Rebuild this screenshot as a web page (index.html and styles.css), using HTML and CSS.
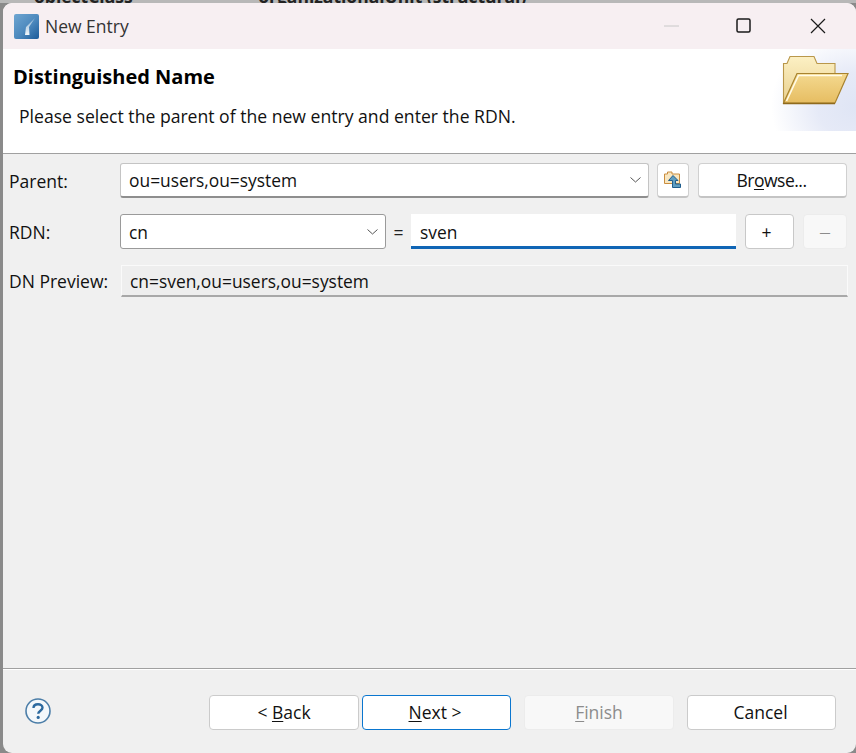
FILE: index.html
```html
<!DOCTYPE html>
<html lang="en">
<head>
  <meta charset="UTF-8">
  <title>New Entry</title>
  <link rel="stylesheet" href="styles.css">
</head>
<body>
  <div class="behind">
    <span class="behind-a">objectClass</span>
    <span class="behind-b">organizationalUnit (structural)</span>
  </div>
  <div class="window">
    <div class="titlebar">
      <svg class="app-icon" width="25" height="25" viewBox="0 0 25 25">
        <defs>
          <linearGradient id="appBg" x1="0" y1="0" x2="1" y2="1">
            <stop offset="0" stop-color="#6fa6d2"/>
            <stop offset="0.55" stop-color="#4c88bd"/>
            <stop offset="1" stop-color="#1b5a99"/>
          </linearGradient>
          <linearGradient id="appRay" x1="0" y1="0" x2="0" y2="1">
            <stop offset="0" stop-color="#cfe0ee" stop-opacity="0.5"/>
            <stop offset="1" stop-color="#ffffff" stop-opacity="0.95"/>
          </linearGradient>
        </defs>
        <rect width="25" height="25" rx="2" fill="url(#appBg)"/>
        <path d="M21 4 L15 13 L15.5 21 L11 21 L12 13 Z" fill="url(#appRay)"/>
      </svg>
      <span class="title">New Entry</span>
      <div class="controls">
        <svg class="ctl ctl-min" width="16" height="16" viewBox="0 0 16 16"><path d="M0 8H15" stroke="#c8c8c8" stroke-width="1"/></svg>
        <svg class="ctl ctl-max" width="16" height="16" viewBox="0 0 16 16"><rect x="1" y="1" width="13" height="13" rx="1.5" fill="none" stroke="#1a1a1a" stroke-width="1.5"/></svg>
        <svg class="ctl ctl-close" width="16" height="16" viewBox="0 0 16 16"><path d="M1 1L15 15M15 1L1 15" stroke="#1a1a1a" stroke-width="1.2"/></svg>
      </div>
    </div>

    <div class="banner">
      <div class="banner-text">
        <h1>Distinguished Name</h1>
        <p>Please select the parent of the new entry and enter the RDN.</p>
      </div>
      <div class="banner-art">
        <svg width="72" height="52" viewBox="0 0 72 52">
          <defs>
            <linearGradient id="folderBack" x1="0" y1="0" x2="0" y2="1">
              <stop offset="0" stop-color="#fcf0c4"/>
              <stop offset="1" stop-color="#e9d08e"/>
            </linearGradient>
            <linearGradient id="folderFront" x1="0" y1="0" x2="0" y2="1">
              <stop offset="0" stop-color="#f4d98f"/>
              <stop offset="1" stop-color="#e6bd62"/>
            </linearGradient>
          </defs>
          <path d="M3.5 48V8.5H7L10 1.5H34L37 8.5H55V19H18L6 48Z" fill="url(#folderBack)" stroke="#b9974a" stroke-width="1.1"/>
          <path d="M3.5 48L17 18.5H68L55 48Z" fill="url(#folderFront)" stroke="#a8832f" stroke-width="1.2"/>
          <path d="M6.5 46L18.5 20.5H62" fill="none" stroke="#fffbe8" stroke-width="1.6"/>
          <path d="M3 48.5H55" stroke="#8f6a1c" stroke-width="1.6"/>
        </svg>
      </div>
    </div>

    <div class="content">
      <div class="row row-parent">
        <label class="field-label">Parent:</label>
        <div class="combo combo-parent">
          <span class="value">ou=users,ou=system</span>
          <svg class="chevron" width="11" height="6" viewBox="0 0 11 6"><path d="M0.5 0.5L5.5 5L10.5 0.5" fill="none" stroke="#555" stroke-width="1"/></svg>
        </div>
        <button class="btn btn-icon">
          <svg width="20" height="20" viewBox="0 0 20 20">
            <path d="M1.5 4H4.5V2H9V4H16.5V13.5H1.5Z" fill="#f8e6c0" stroke="#c98d3e" stroke-width="1"/>
            <path d="M10 5.5L15 10.5H12.5V14H17.5V17.5H9.5V10.5H5.5Z" fill="#5f9dbf" stroke="#1d5c8c" stroke-width="1"/>
          </svg>
        </button>
        <button class="btn btn-browse"><span>Br<u>o</u>wse...</span></button>
      </div>

      <div class="row row-rdn">
        <label class="field-label">RDN:</label>
        <div class="combo combo-rdn">
          <span class="value">cn</span>
          <svg class="chevron" width="11" height="6" viewBox="0 0 11 6"><path d="M0.5 0.5L5.5 5L10.5 0.5" fill="none" stroke="#555" stroke-width="1"/></svg>
        </div>
        <span class="equals">=</span>
        <div class="text-input"><span class="value">sven</span></div>
        <button class="btn btn-small btn-plus">+</button>
        <button class="btn btn-small btn-off">&#8212;</button>
      </div>

      <div class="row row-preview">
        <label class="field-label">DN Preview:</label>
        <div class="readonly"><span class="value">cn=sven,ou=users,ou=system</span></div>
      </div>
    </div>

    <div class="footer">
      <svg class="help" width="28" height="28" viewBox="0 0 28 28">
        <circle cx="14" cy="14" r="12" fill="#f4f8fb" stroke="#4c7ea8" stroke-width="1.6"/>
        <path d="M9.5 11C9.5 8.5 11.5 7.2 14 7.2C16.5 7.2 18.5 8.6 18.5 10.8C18.5 13.6 14.2 13.8 14.2 16.8" fill="none" stroke="#2d6a9f" stroke-width="2.4"/>
        <circle cx="14.2" cy="20.4" r="1.6" fill="#2d6a9f"/>
      </svg>
      <div class="footer-buttons">
        <button class="btn btn-nav btn-back"><span>&lt; <u>B</u>ack</span></button>
        <button class="btn btn-nav btn-next"><span><u>N</u>ext &gt;</span></button>
        <button class="btn btn-nav btn-finish btn-off"><span><u>F</u>inish</span></button>
        <button class="btn btn-nav btn-cancel">Cancel</button>
      </div>
    </div>
  </div>
</body>
</html>
```

FILE: styles.css
```css
* { box-sizing: border-box; }
html, body { margin: 0; height: 100%; }
body { width: 856px; height: 753px; overflow: hidden; background: #8a8a8a; font-family: "Open Sans", "Noto Sans", sans-serif; font-size: 17.5px; color: #111; }

.behind { height: 3px; overflow: hidden; background: #b8b8b8; white-space: nowrap; line-height: 10px; font-weight: bold; font-size: 17.5px; color: #222; }
.behind-a { display: inline-block; margin: -9px 0 0 34px; vertical-align: top; }
.behind-b { display: inline-block; margin: -9px 0 0 121px; vertical-align: top; }

.window { margin-left: 3px; height: 750px; background: #f0f0f0; border-radius: 9px; overflow: hidden; display: flex; flex-direction: column; }

.titlebar { height: 46px; background: #f7eff2; display: flex; align-items: center; padding-left: 11px; flex: none; }
.app-icon { flex: none; }
.title { margin-left: 6px; font-size: 17.5px; color: #333; }
.controls { margin-left: auto; display: flex; align-items: center; }
.ctl { flex: none; }
.ctl-min { margin-right: 56px; }
.ctl-max { margin-right: 58px; }
.ctl-close { margin-right: 30px; }

.banner { height: 105px; flex: none; background: #fff; border-bottom: 1px solid #a0a0a0; display: flex; justify-content: space-between; }
.banner-text h1 { margin: 15px 0 0 10px; font-size: 20px; line-height: 26px; font-weight: bold; color: #000; }
.banner-text p { margin: 14px 0 0 16px; font-size: 17.6px; line-height: 24px; color: #111; }
.banner-art { width: 90px; height: 82px; padding: 6px 0 0 14px; background: radial-gradient(ellipse 85px 75px at 100% 70%, #dfe5f5 0%, #e6eaf7 45%, #ffffff 100%); }

.content { flex: 1; border-bottom: 1px solid #a0a0a0; padding: 9px 8px 0 6px; display: flex; flex-direction: column; }
.row { display: flex; align-items: center; }
.row-parent { height: 35px; }
.row-rdn { height: 35px; margin-top: 16px; }
.row-preview { height: 32px; margin-top: 16px; }
.field-label { width: 111px; flex: none; font-size: 17.5px; color: #111; }
.value { font-size: 17.4px; color: #111; }

.combo { height: 100%; flex: none; background: #fff; border: 1px solid #c4c4c4; border-bottom: 2px solid #8e8e8e; border-radius: 3px; padding: 0 8px; display: flex; align-items: center; justify-content: space-between; }
.combo-parent { width: 529px; }
.combo-rdn { width: 266px; border-bottom-width: 1px; border-color: #9a9a9a; }
.chevron { flex: none; margin-right: -1px; }
.equals { width: 25px; flex: none; text-align: center; font-size: 17.5px; color: #222; }
.text-input { width: 325px; height: 100%; flex: none; background: #fff; border-bottom: 3px solid #0f65b5; padding: 3px 9px 0; display: flex; align-items: center; }
.readonly { width: 727px; margin-left: 1px; height: 100%; background: #eeeeee; border: 1px solid #fafafa; border-bottom: 2px solid #a8a8a8; padding: 0 8px; display: flex; align-items: center; }

.btn { height: 100%; flex: none; padding: 0; background: #fff; border: 1px solid #d0d0d0; border-bottom: 2px solid #c4c4c4; border-radius: 4px; font-family: inherit; font-size: 17.5px; color: #111; display: flex; align-items: center; justify-content: center; }
.btn u { text-underline-offset: 2px; }
.btn-icon { width: 32px; margin-left: 8px; }
.btn-browse { width: 149px; margin-left: 9px; padding: 0 2px 0 0; letter-spacing: -0.5px; }
.btn-small { width: 49px; border: 1px solid #c8c8c8; }
.btn-plus { padding-right: 6px; }
.row-rdn .btn-small { margin-left: 9px; }
.row-rdn .btn-off { width: 44px; font-size: 11px; }
.btn-off { background: #f8f8f8; border: 1px solid #ececec; color: #8c8c8c; }

.footer { height: 84px; flex: none; border-top: 1px solid #fff; display: flex; padding: 25px 20px 0 21px; }
.help { flex: none; margin-top: 2px; }
.footer-buttons { margin-left: auto; display: flex; height: 35px; }
.btn-nav { width: 150px; padding-bottom: 2px; border: 1px solid #cbcbcb; }
.btn-next { margin-left: 3px; width: 149px; padding-right: 3px; border: 1.5px solid #0a76cf; }
.btn-finish { margin-left: 13px; border: 1px solid #ececec; }
.btn-cancel { margin-left: 13px; width: 149px; padding-right: 2px; }
```
